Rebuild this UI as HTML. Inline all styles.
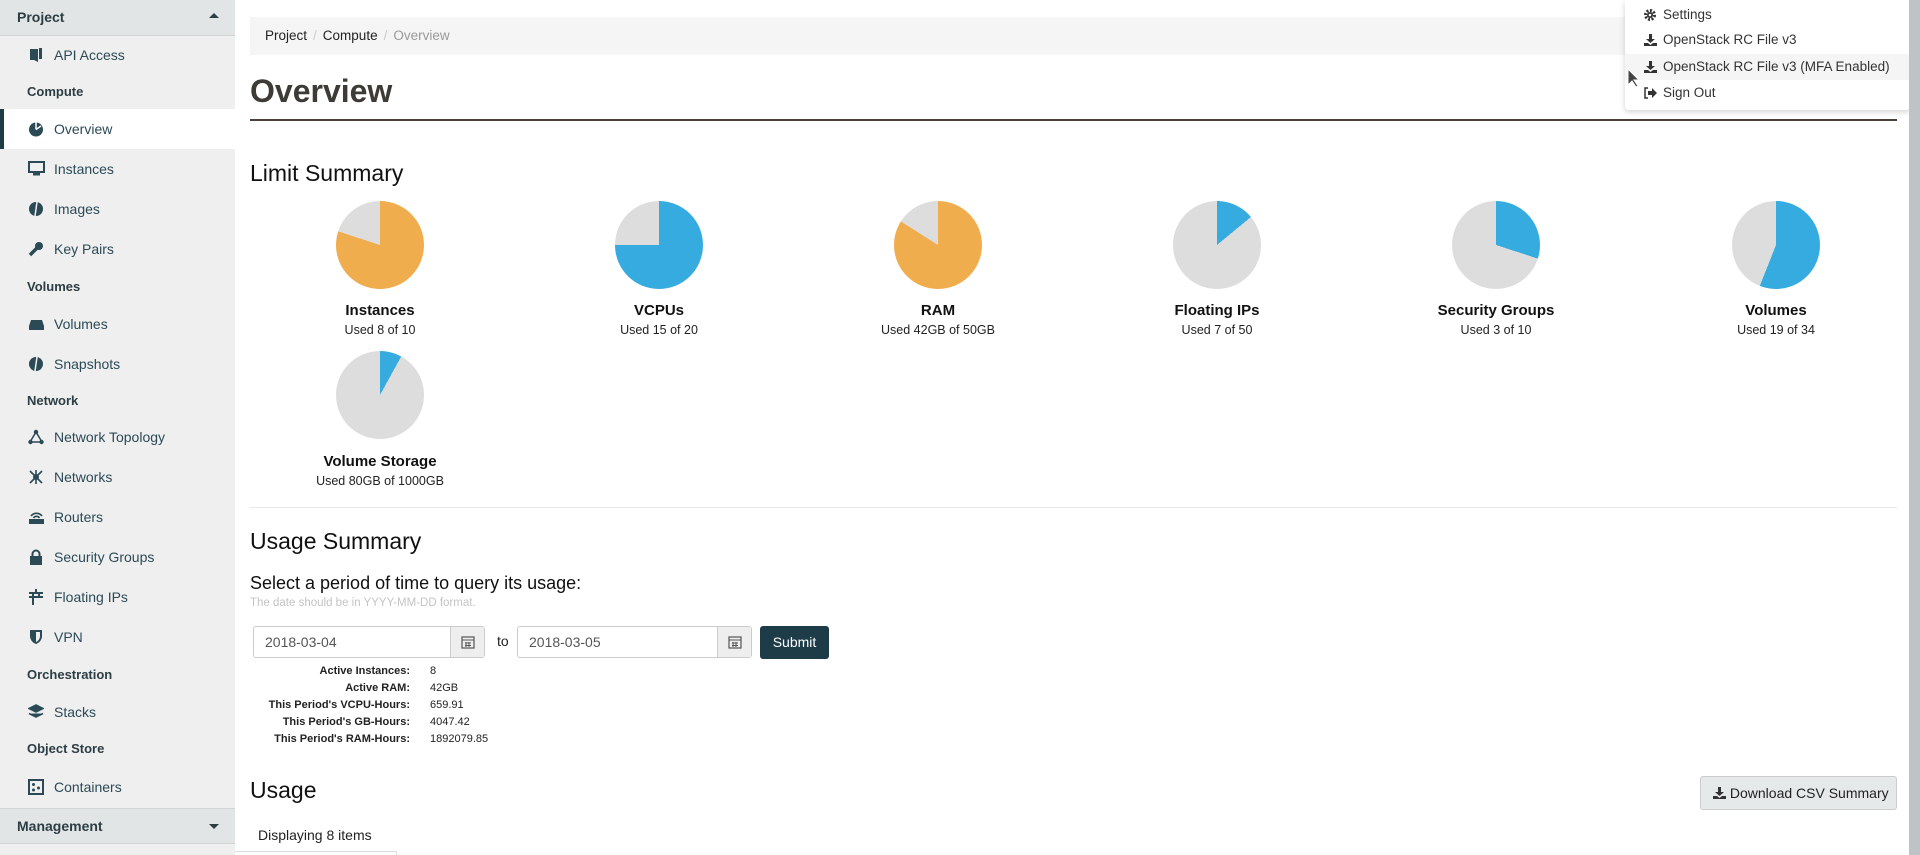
<!DOCTYPE html>
<html><head><meta charset="utf-8"><style>
*{box-sizing:border-box;margin:0;padding:0}
body{width:1920px;height:855px;overflow:hidden;background:#fff;font-family:"Liberation Sans",sans-serif;color:#222;position:relative}
#sb{position:absolute;left:0;top:0;width:235px;height:855px;background:#efefef}
.band{position:absolute;left:0;width:235px;height:36px;background:#e1e5e6;border-bottom:1px solid #d0d6d8;font-weight:bold;font-size:14px;color:#2c3e44;padding-left:17px;line-height:34px}
.band i{position:absolute;right:16px;top:15px;width:0;height:0;border-left:5px solid transparent;border-right:5px solid transparent}
.it{position:absolute;left:0;width:235px;height:40px;font-size:14px;color:#2b4a56;line-height:40px;padding-left:54px}
.it.act{background:#fff;border-left:4px solid #1d3c48;padding-left:50px}
.it svg{position:absolute;left:28px;top:12px}
.it.act svg{left:24px}
.gh{position:absolute;left:27px;font-size:13px;font-weight:bold;color:#2c3e44}
#bc{position:absolute;left:250px;top:17px;width:1650px;height:38px;background:#f5f5f5;font-size:13.5px;line-height:38px;padding-left:15px;color:#222}
#bc span.s{color:#ccc;margin:0 6px}
h1{position:absolute;left:250px;top:73px;font-size:32px;font-weight:bold;color:#3e3a36}
#rule{position:absolute;left:250px;top:119px;width:1647px;height:2px;background:#4a3f39}
.h2{position:absolute;left:250px;font-size:23px;color:#111}
.pie{position:absolute;width:88px;height:88px;border-radius:50%}
.pl{position:absolute;width:260px;text-align:center}
.pl b{display:block;font-size:15px;color:#111}
.pl span{display:block;font-size:12.5px;margin-top:4px}
#hr{position:absolute;left:250px;top:507px;width:1647px;height:1px;background:#e8e8e8}
.inp{position:absolute;top:626px;height:32px;border:1px solid #ccc;border-radius:3px;font-size:14px;color:#555;line-height:30px;padding-left:11px}
.add{position:absolute;top:0;right:0;width:34px;height:30px;background:#eee;border-left:1px solid #ccc}
.add svg{position:absolute;left:10px;top:8px}
.st{position:absolute;font-size:11px;line-height:17px}
.st.l{left:250px;width:160px;text-align:right;font-weight:bold}
.st.v{left:430px}
#dd{position:absolute;left:1625px;top:0;width:285px;height:110px;background:#fff;box-shadow:0 2px 6px rgba(0,0,0,.18);border-radius:0 0 4px 4px;font-size:13.5px}
#dd div{position:absolute;left:0;width:285px;height:26px;line-height:26px;padding-left:38px;color:#333}
#dd svg{position:absolute;left:19px;top:7px}
#scr{position:absolute;left:1909px;top:0;width:11px;height:855px;background:#bfc3c6}
</style></head><body>
<div id="sb">
<div class="band" style="top:0">Project<i style="border-bottom:5px solid #2c3e44;top:13px"></i></div>
<div class="it" style="top:35px"><svg width="16" height="16"><path d="M2 2h8v13l-4-2H2z M11 1h3v11h-3z" fill="#2b4a56"/></svg>API Access</div>
<div class="gh" style="top:84px">Compute</div>
<div class="it act" style="top:109px"><svg width="16" height="16"><circle cx="8" cy="8.5" r="7" fill="#2b4a56"/><path d="M8 8.5V1.5" stroke="#fff" stroke-width="1.5"/><path d="M8 8.5l5-3.5" stroke="#fff" stroke-width="1.5"/></svg>Overview</div>
<div class="it" style="top:149px"><svg width="17" height="16"><rect x="1" y="1" width="15" height="10" fill="none" stroke="#2b4a56" stroke-width="2"/><rect x="5" y="12" width="7" height="2.5" fill="#2b4a56"/></svg>Instances</div>
<div class="it" style="top:189px"><svg width="16" height="16"><circle cx="8" cy="8" r="7" fill="#2b4a56"/><path d="M9 1L7 15" stroke="#efefef" stroke-width="1.5"/></svg>Images</div>
<div class="it" style="top:229px"><svg width="16" height="16"><circle cx="11" cy="5" r="4" fill="#2b4a56"/><path d="M9 7L2 14" stroke="#2b4a56" stroke-width="3.5"/></svg>Key Pairs</div>
<div class="gh" style="top:279px">Volumes</div>
<div class="it" style="top:304px"><svg width="17" height="16"><path d="M3 4h11l2 6v4H1v-4z" fill="#2b4a56"/></svg>Volumes</div>
<div class="it" style="top:344px"><svg width="16" height="16"><circle cx="8" cy="8" r="7" fill="#2b4a56"/><path d="M9 1L7 15" stroke="#efefef" stroke-width="1.5"/></svg>Snapshots</div>
<div class="gh" style="top:393px">Network</div>
<div class="it" style="top:417px"><svg width="16" height="16"><path d="M8 3L2 13M8 3l6 10M2 13h12" stroke="#2b4a56" stroke-width="1.5" fill="none"/><circle cx="8" cy="3" r="2.2" fill="#2b4a56"/><circle cx="2.5" cy="13" r="2.2" fill="#2b4a56"/><circle cx="13.5" cy="13" r="2.2" fill="#2b4a56"/></svg>Network Topology</div>
<div class="it" style="top:457px"><svg width="16" height="16"><path d="M2 2l12 12M14 2L2 14M8 1v14" stroke="#2b4a56" stroke-width="1.6"/><circle cx="8" cy="8" r="3" fill="#2b4a56"/></svg>Networks</div>
<div class="it" style="top:497px"><svg width="17" height="16"><rect x="1" y="10" width="15" height="5" fill="#2b4a56"/><path d="M3 7a7 7 0 0 1 11 0M5.5 9a3.5 3.5 0 0 1 6 0" stroke="#2b4a56" stroke-width="1.6" fill="none"/></svg>Routers</div>
<div class="it" style="top:537px"><svg width="16" height="16"><rect x="2" y="7" width="12" height="9" fill="#2b4a56"/><path d="M4.5 7V5a3.5 3.5 0 0 1 7 0v2" stroke="#2b4a56" stroke-width="2" fill="none"/></svg>Security Groups</div>
<div class="it" style="top:577px"><svg width="16" height="16"><path d="M1 4h14M1 8h14M5 4v12M11 4v4M8 0v4" stroke="#2b4a56" stroke-width="2"/></svg>Floating IPs</div>
<div class="it" style="top:617px"><svg width="16" height="16"><path d="M2 1h12v6c0 4-3 7-6 8-3-1-6-4-6-8z" fill="#2b4a56"/><path d="M8 3v10c2-1 4-3 4-6V3z" fill="#efefef"/></svg>VPN</div>
<div class="gh" style="top:667px">Orchestration</div>
<div class="it" style="top:692px"><svg width="16" height="16"><path d="M8 1l7 3.5-7 3.5-7-3.5z M1 9.5l7 3.5 7-3.5" fill="#2b4a56" stroke="#2b4a56" stroke-width="1.6"/></svg>Stacks</div>
<div class="gh" style="top:741px">Object Store</div>
<div class="it" style="top:767px"><svg width="16" height="16"><rect x="1" y="1" width="14" height="14" fill="none" stroke="#2b4a56" stroke-width="2"/><circle cx="5.5" cy="5.5" r="1.5" fill="#2b4a56"/><circle cx="10.5" cy="9" r="1.5" fill="#2b4a56"/><circle cx="5.5" cy="11" r="1.5" fill="#2b4a56"/></svg>Containers</div>
<div class="band" style="top:808px;border-top:1px solid #d0d6d8">Management<i style="border-top:5px solid #2c3e44;top:15px"></i></div>
</div>
<div id="bc">Project<span class="s">/</span>Compute<span class="s">/</span><span style="color:#999">Overview</span></div>
<h1>Overview</h1>
<div id="rule"></div>
<div class="h2" style="top:160px">Limit Summary</div>

<div class="pie" style="left:336px;top:201px;background:conic-gradient(#f0ad4e 0 80%,#ddd 0)"></div>
<div class="pl" style="left:250px;top:302px"><b>Instances</b><span>Used 8 of 10</span></div>
<div class="pie" style="left:615px;top:201px;background:conic-gradient(#36abe0 0 75%,#ddd 0)"></div>
<div class="pl" style="left:529px;top:302px"><b>VCPUs</b><span>Used 15 of 20</span></div>
<div class="pie" style="left:894px;top:201px;background:conic-gradient(#f0ad4e 0 84%,#ddd 0)"></div>
<div class="pl" style="left:808px;top:302px"><b>RAM</b><span>Used 42GB of 50GB</span></div>
<div class="pie" style="left:1173px;top:201px;background:conic-gradient(#36abe0 0 14%,#ddd 0)"></div>
<div class="pl" style="left:1087px;top:302px"><b>Floating IPs</b><span>Used 7 of 50</span></div>
<div class="pie" style="left:1452px;top:201px;background:conic-gradient(#36abe0 0 30%,#ddd 0)"></div>
<div class="pl" style="left:1366px;top:302px"><b>Security Groups</b><span>Used 3 of 10</span></div>
<div class="pie" style="left:1732px;top:201px;background:conic-gradient(#36abe0 0 56%,#ddd 0)"></div>
<div class="pl" style="left:1646px;top:302px"><b>Volumes</b><span>Used 19 of 34</span></div>
<div class="pie" style="left:336px;top:351px;background:conic-gradient(#36abe0 0 8%,#ddd 0)"></div>
<div class="pl" style="left:250px;top:453px"><b>Volume Storage</b><span>Used 80GB of 1000GB</span></div>

<div id="hr"></div>
<div class="h2" style="top:528px">Usage Summary</div>
<div style="position:absolute;left:250px;top:573px;font-size:18px;color:#111">Select a period of time to query its usage:</div>
<div style="position:absolute;left:250px;top:597px;font-size:11.5px;color:#c4c4c4">The date should be in YYYY-MM-DD format.</div>
<div class="inp" style="left:253px;width:232px">2018-03-04<div class="add"><svg width="14" height="14"><rect x="1" y="2" width="12" height="11" fill="none" stroke="#555" stroke-width="1.2"/><path d="M1 5h12M4 8h6M4 10.5h6M5 7v5M8 7v5" stroke="#555"/></svg></div></div>
<div style="position:absolute;left:497px;top:633px;font-size:14px">to</div>
<div class="inp" style="left:517px;width:235px">2018-03-05<div class="add"><svg width="14" height="14"><rect x="1" y="2" width="12" height="11" fill="none" stroke="#555" stroke-width="1.2"/><path d="M1 5h12M4 8h6M4 10.5h6M5 7v5M8 7v5" stroke="#555"/></svg></div></div>
<div style="position:absolute;left:760px;top:626px;width:69px;height:33px;background:#1d3c48;border-radius:3px;color:#fff;font-size:14px;line-height:33px;text-align:center">Submit</div>
<div class="st l" style="top:663px">Active Instances:<br>Active RAM:<br>This Period's VCPU-Hours:<br>This Period's GB-Hours:<br>This Period's RAM-Hours:</div>
<div class="st v" style="top:663px">8<br>42GB<br>659.91<br>4047.42<br>1892079.85</div>
<div class="h2" style="top:777px">Usage</div>
<div style="position:absolute;left:1700px;top:776px;width:197px;height:34px;background:#e6e9ea;border:1px solid #ccc;border-radius:3px;font-size:14px;line-height:32px;padding-left:12px;color:#222"><svg width="13" height="12" style="vertical-align:-1px"><path d="M5 0h3v5h3L6.5 9 2 5h3z M0 9h4l2.5 2L9 9h4v3H0z" fill="#333"/></svg> Download CSV Summary</div>
<div style="position:absolute;left:258px;top:827px;font-size:14px">Displaying 8 items</div>
<div style="position:absolute;left:235px;top:851px;width:162px;height:4px;border-top:1px solid #ddd;border-right:1px solid #ddd"></div>

<div id="dd">
<div style="top:2px"><svg width="12" height="12"><circle cx="6" cy="6" r="4.5" fill="none" stroke="#333" stroke-width="3" stroke-dasharray="2 1.5"/><circle cx="6" cy="6" r="3" fill="#333"/><circle cx="6" cy="6" r="1.3" fill="#fff"/></svg>Settings</div>
<div style="top:27px"><svg width="13" height="12"><path d="M5 0h3v5h3L6.5 9 2 5h3z M0 9h4l2.5 2L9 9h4v3H0z" fill="#333"/></svg>OpenStack RC File v3</div>
<div style="top:54px;background:#f5f5f5"><svg width="13" height="12"><path d="M5 0h3v5h3L6.5 9 2 5h3z M0 9h4l2.5 2L9 9h4v3H0z" fill="#333"/></svg>OpenStack RC File v3 (MFA Enabled)</div>
<div style="top:80px"><svg width="13" height="12"><path d="M4 1H1v10h3" stroke="#333" stroke-width="1.5" fill="none"/><path d="M4 4h4V1l5 5-5 5V8H4z" fill="#333"/></svg>Sign Out</div>
</div>
<svg style="position:absolute;left:1627px;top:68px" width="12" height="20"><path d="M1 1v16l4-4 4 6 2-1-4-6h5z" fill="#444" stroke="#fff" stroke-width="1"/></svg>
<div id="scr"></div>
</body></html>
